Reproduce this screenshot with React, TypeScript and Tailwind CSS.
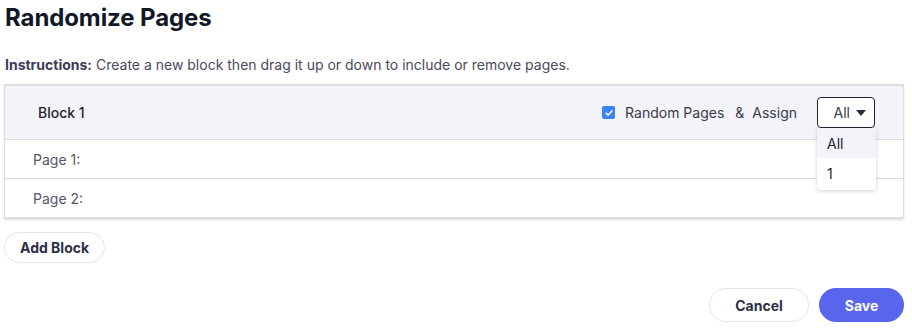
import React from "react";

export default function App() {
  return (
    <div className="w-[912px] h-[329px] bg-white font-['Inter',sans-serif] relative overflow-hidden">
      <div className="pl-[5px] pr-[8px]">
        <h1 className="text-[24px] leading-[36px] font-bold text-[#101828] pt-0 tracking-[-0.1px]">Randomize Pages</h1>
        <p className="mt-[19px] text-[14px] leading-[20px] text-[#4a4a5a]">
          <span className="font-bold text-[#3d3d55]">Instructions:</span> Create a new block then drag it up or down to include or remove pages.
        </p>
      </div>
      <div className="ml-[4px] mr-[8px] mt-[9px] border border-[#dcdde3] border-t-[2px] shadow-[0_2px_2px_rgba(0,0,0,0.14)] relative">
        <div className="h-[54px] bg-[#f3f4f9] flex items-center pl-[33px] pr-[28px] border-b border-[#dcdde3]">
          <span className="text-[14px] text-[#1f1f2a] font-medium">Block 1</span>
          <div className="ml-auto flex items-center">
            <span className="w-[13px] h-[13px] rounded-[2px] bg-[#3b82f6] flex items-center justify-center">
              <svg viewBox="0 0 12 12" className="w-[10px] h-[10px]"><path d="M2.5 6.2 L5 8.5 L9.5 3.5" fill="none" stroke="white" strokeWidth="1.8" strokeLinecap="round" strokeLinejoin="round" /></svg>
            </span>
            <span className="ml-[10px] text-[14px] text-[#3a3a48]">Random Pages</span>
            <span className="ml-[11px] text-[14px] text-[#3a3a48]">&amp;</span>
            <span className="ml-[8px] text-[14px] text-[#3a3a48]">Assign</span>
            <div className="ml-[20px] relative">
              <div className="w-[58px] h-[31px] border border-[#1f2433] rounded-[4px] bg-white flex items-center justify-end pr-[8px] gap-[6px]">
                <span className="text-[14px] text-[#3a3a48]">All</span>
                <svg viewBox="0 0 10 6" className="w-[10px] h-[6px]"><path d="M0 0 L10 0 L5 6 Z" fill="#2a2e3a" /></svg>
              </div>
              <div className="absolute left-0 top-[31px] w-[59px] bg-white rounded-[3px] shadow-[0_1px_4px_rgba(0,0,0,0.18)] z-10 pb-[2px]">
                <div className="h-[30px] bg-[#f3f4f9] flex items-center pl-[10px] text-[14px] text-[#22222e]">All</div>
                <div className="h-[30px] flex items-center pl-[10px] text-[14px] text-[#22222e]">1</div>
              </div>
            </div>
          </div>
        </div>
        <div className="h-[39px] flex items-center pl-[28px] border-b border-[#dcdde3] text-[14px] text-[#555566]">Page 1:</div>
        <div className="h-[38px] flex items-center pl-[28px] text-[14px] text-[#555566]">Page 2:</div>
      </div>
      <div className="ml-[4px] mt-[14px]">
        <button className="h-[31px] px-[15px] rounded-full border border-[#e3e4ea] bg-white text-[14px] font-bold text-[#2d2f45]">Add Block</button>
      </div>
      <div className="flex justify-end gap-[10px] mr-[8px] mt-[25px]">
        <button className="h-[34px] w-[100px] rounded-full border border-[#e3e4ea] bg-white text-[14px] font-bold text-[#2d2f45]">Cancel</button>
        <button className="h-[34px] w-[85px] rounded-full bg-[#5865ec] text-[14px] font-bold text-white">Save</button>
      </div>
    </div>
  );
}
